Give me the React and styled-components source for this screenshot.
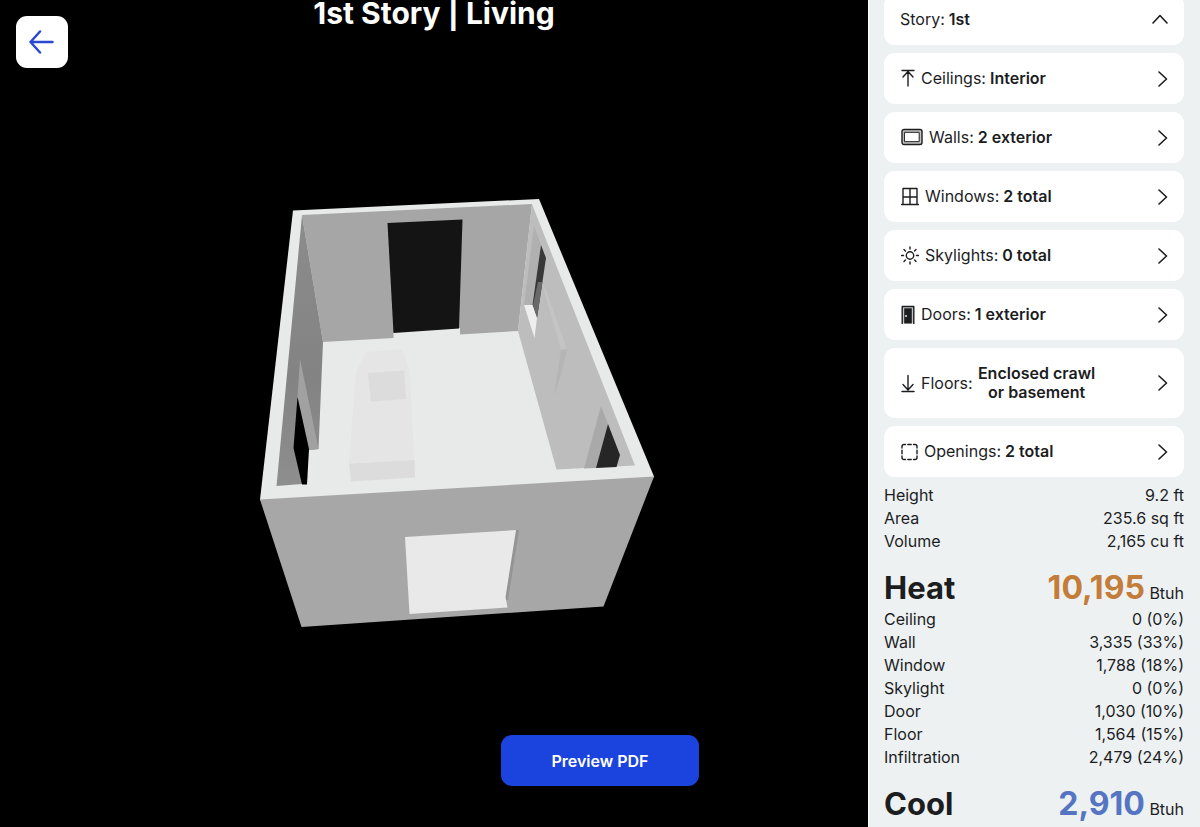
import styled, { createGlobalStyle } from 'styled-components';

const items = [
  { label: 'Ceilings', value: 'Interior', icon: 'ceiling' },
  { label: 'Walls', value: '2 exterior', icon: 'wall' },
  { label: 'Windows', value: '2 total', icon: 'window' },
  { label: 'Skylights', value: '0 total', icon: 'sun' },
  { label: 'Doors', value: '1 exterior', icon: 'door' },
  { label: 'Floors', value: 'Enclosed crawl or basement', icon: 'floor', wrap: true },
  { label: 'Openings', value: '2 total', icon: 'opening' },
];

const dimensions = [
  ['Height', '9.2 ft'],
  ['Area', '235.6 sq ft'],
  ['Volume', '2,165 cu ft'],
];

const heat = [
  ['Ceiling', '0 (0%)'],
  ['Wall', '3,335 (33%)'],
  ['Window', '1,788 (18%)'],
  ['Skylight', '0 (0%)'],
  ['Door', '1,030 (10%)'],
  ['Floor', '1,564 (15%)'],
  ['Infiltration', '2,479 (24%)'],
];

const icons = {
  ceiling: {
    width: 14,
    art: <path d='M1 1.5H13M7 17V2.5M2 8L7 2.5L12 8' />,
  },
  wall: {
    width: 22,
    art: (
      <>
        <rect x='1' y='1.5' width='20' height='15' rx='2' fill='#c4c4c4' />
        <rect x='3.8' y='4.3' width='14.4' height='9.4' fill='#fff' strokeWidth='1' />
      </>
    ),
  },
  window: {
    width: 18,
    art: <path d='M2 17.5V1.5H16V17.5M0.5 17.5H17.5M9 1.5V17.5M2 10H16' />,
  },
  sun: {
    width: 18,
    art: (
      <>
        <circle cx='9' cy='9.5' r='3.7' />
        <path d='M9 1V3M9 16V18M.5 9.5H2.5M15.5 9.5H17.5M3 3.5L4.4 4.9M13.6 14.1L15 15.5M3 15.5L4.4 14.1M13.6 4.9L15 3.5' />
      </>
    ),
  },
  door: {
    width: 14,
    art: (
      <>
        <path d='M1.2 18.5V1.5H12.8V18.5' fill='#c4c4c4' />
        <path d='M3.2 3.3H10.8V18.5H3.2Z' fill='currentColor' stroke='none' />
        <circle cx='5' cy='11' r='0.9' fill='#fff' stroke='none' />
      </>
    ),
  },
  floor: {
    width: 14,
    art: <path d='M1 18.5H13M7 2.5V17M2 11.5L7 17L12 11.5' />,
  },
  opening: {
    width: 17,
    art: (
      <path d='M1 6V4.5Q1 2.5 3 2.5H4.5M12.5 2.5H14Q16 2.5 16 4.5V6M16 14V15.5Q16 17.5 14 17.5H12.5M4.5 17.5H3Q1 17.5 1 15.5V14M6.8 2.5H10.2M6.8 17.5H10.2M1 8.3V11.7M16 8.3V11.7' />
    ),
  },
};

const Icon = ({ name }) => {
  const { width, art } = icons[name];
  return (
    <Glyph width={width} height='20' viewBox={`0 0 ${width} 20`} aria-hidden='true'>
      {art}
    </Glyph>
  );
};

const Room = () => (
  <Scene viewBox='0 0 868 827' role='img' aria-label='3D model of the living room'>
    {/* rim and floor */}
    <polygon fill='#e8e9e9' points='293,210.5 539,199 654,476.5 652,480 262,503 260,499.5' />
    {/* back wall */}
    <polygon fill='#a6a6a6' points='302,215 532,204 518,331 460,334.5 393.5,338 323,342' />
    <polygon fill='#e8e9e9' points='393.5,332 460,328 460,335 393.5,339' />
    <polygon fill='#141414' points='387.5,223 462.5,219.5 459,328.5 393.5,333' />
    {/* left wall */}
    <polygon fill='url(#leftWall)' points='302,215 323,342 318.5,449 309,450 302,484 276.5,486' />
    <polygon fill='#a1a1a1' points='300,359 297.5,397 309,450 318.5,449' />
    <polygon fill='#000' points='297.5,397 309,449 307,484.5 302,484.5 293.5,448' />
    {/* right wall */}
    <polygon fill='#bdbdbd' points='532,204 518,331 556.5,469.5 635,465.5' />
    <polygon fill='#b0b0b0' points='534,226 541,245 532.5,305 524,305' />
    <polygon fill='#383838' points='541,245 546,258 537,318 532.5,305' />
    <polygon fill='#696969' points='538,282 542.5,282 537,318 533,305' />
    <polygon fill='#eee' points='524,305 532.5,305 537,318 534.5,338' />
    <polygon fill='#c4c4c4' points='542,283 546,290 567,349 561,350' />
    <polygon fill='#b5b5b5' points='561,350 567,349 561,375 554,396' />
    <polygon fill='#a9a9a9' points='601,406 608,424 596,468 584,468.5' />
    <polygon fill='#262626' points='608,424 620,455 616.5,467 596,468' />
    {/* furniture */}
    <polygon fill='#e5e5e5' points='366,352 402,349 410,372 414,460 349,463 356,372' />
    <polygon fill='#dcdcdc' points='368,373 404,370.5 406,399 371,401.5' />
    <polygon fill='#dcdcdc' points='349,463.5 414.5,460 415,477.5 351,481.5' />
    {/* front wall */}
    <polygon fill='#a7a7a7' points='260,499.5 654,476.5 603.5,606.5 301.5,627' />
    <polygon fill='#949494' points='516,530 519,530 508,600 505,600' />
    <polygon fill='#e9e9e9' points='405,537 516,530 505.5,597 507.5,607.5 409.5,614' />
    <defs>
      <linearGradient id='leftWall' x1='0' y1='0' x2='0' y2='1'>
        <stop offset='0' stopColor='#8c8c8c' />
        <stop offset='0.6' stopColor='#838383' />
        <stop offset='1' stopColor='#8e8e8e' />
      </linearGradient>
    </defs>
  </Scene>
);

const DataTable = ({ label, rows }) => (
  <Table aria-label={label}>
    <tbody>
      {rows.map(([name, value]) => (
        <tr key={name}>
          <th scope='row'>{name}</th>
          <td>{value}</td>
        </tr>
      ))}
    </tbody>
  </Table>
);

const App = () => {
  return (
    <Wrapper>
      <GlobalStyle />
      <Viewer>
        <Room />
        <BackButton type='button' aria-label='Back'>
          <svg width='26' height='26' viewBox='0 0 26 26' aria-hidden='true'>
            <path d='M23.5 13H1.5M11 2.5L1.5 13L11 23.5' />
          </svg>
        </BackButton>
        <Title>1st Story | Living</Title>
      </Viewer>
      <Sidebar>
        <CardList>
          <Card type='button' aria-expanded='true'>
            <Label>Story:</Label>
            <Value>1st</Value>
            <Chevron width='16' height='16' viewBox='0 0 16 16' aria-hidden='true'>
              <path d='M1 11L8 3.5L15 11' />
            </Chevron>
          </Card>
          {items.map(({ label, value, icon, wrap }) => (
            <Card type='button' key={label}>
              <Icon name={icon} />
              <Label>{label}:</Label>
              <Value $wrap={wrap}>{value}</Value>
              <Chevron width='10' height='16' viewBox='0 0 10 16' aria-hidden='true'>
                <path d='M1 1L8.5 8L1 15' />
              </Chevron>
            </Card>
          ))}
        </CardList>
        <DataTable label='Dimensions' rows={dimensions} />
        <Load>
          <h2>Heat</h2>
          <p>
            <Amount $color='#c47c3a'>10,195</Amount> Btuh
          </p>
        </Load>
        <DataTable label='Heat load' rows={heat} />
        <Load>
          <h2>Cool</h2>
          <p>
            <Amount $color='#5575c2'>2,910</Amount> Btuh
          </p>
        </Load>
      </Sidebar>
      <PreviewButton type='button'>Preview PDF</PreviewButton>
    </Wrapper>
  );
};

const GlobalStyle = createGlobalStyle`
  * {
    box-sizing: border-box;
  }
  body {
    margin: 0;
    background: #000;
    color: #1c1d1f;
    font-family: Inter, 'Liberation Sans', sans-serif;
    font-size: 16px;
  }
  button {
    font: inherit;
    color: inherit;
    border: none;
    cursor: pointer;
  }
`;

const Wrapper = styled.main`
  display: flex;
  height: 100vh;
  overflow: hidden;
  position: relative;
`;

const Viewer = styled.section`
  flex: 1;
  min-width: 0;
  position: relative;
  background: #000;
`;

const Scene = styled.svg`
  display: block;
  width: 100%;
  height: 100%;
`;

const BackButton = styled.button`
  position: absolute;
  top: 16px;
  left: 16px;
  width: 52px;
  height: 52px;
  padding: 0;
  display: flex;
  align-items: center;
  justify-content: center;
  background: #fff;
  border-radius: 11px;
  svg {
    fill: none;
    stroke: #2a49cf;
    stroke-width: 2.5;
    stroke-linecap: round;
    stroke-linejoin: round;
  }
`;

const Title = styled.h1`
  position: absolute;
  top: 0;
  left: 0;
  right: 0;
  margin: 0;
  text-align: center;
  font-size: 30px;
  font-weight: 700;
  line-height: 26px;
  color: #fff;
  pointer-events: none;
`;

const PreviewButton = styled.button`
  position: absolute;
  bottom: 41px;
  left: 50%;
  transform: translateX(-50%);
  width: 198px;
  height: 51px;
  background: #1b43dd;
  border-radius: 11px;
  color: #fff;
  font-weight: 600;
`;

const Sidebar = styled.aside`
  flex: 0 0 332px;
  padding: 0 16px 0 15px;
  background: #edf1f2;
  border-left: 1px solid #fafbfb;
  overflow: hidden;
`;

/* the list is scrolled slightly past the top of the panel */
const CardList = styled.div`
  display: flex;
  flex-direction: column;
  gap: 8px;
  margin: -6px 0 7px;
`;

const Card = styled.button`
  display: flex;
  align-items: center;
  width: 100%;
  padding: 16px;
  line-height: 19px;
  background: #fff;
  border-radius: 11px;
`;

const Glyph = styled.svg`
  flex: none;
  height: 20px;
  margin: -1px 6px -1px 1px;
  fill: none;
  stroke: currentColor;
  stroke-width: 1.4;
  stroke-linecap: round;
  stroke-linejoin: round;
`;

const Label = styled.span`
  margin-right: 4px;
`;

const Value = styled.strong`
  font-weight: 600;
  text-align: center;
  max-width: ${({ $wrap }) => ($wrap ? '120px' : 'none')};
`;

const Chevron = styled.svg`
  flex: none;
  margin-left: auto;
  fill: none;
  stroke: currentColor;
  stroke-width: 1.6;
  stroke-linecap: round;
  stroke-linejoin: round;
`;

const Table = styled.table`
  width: 100%;
  border-collapse: collapse;
  line-height: 23px;
  th,
  td {
    padding: 0;
    font-weight: 400;
    text-align: left;
  }
  td {
    text-align: right;
  }
`;

const Load = styled.div`
  display: flex;
  align-items: baseline;
  justify-content: space-between;
  margin-top: 15px;
  h2,
  p {
    margin: 0;
  }
  h2 {
    font-size: 31px;
    font-weight: 700;
    line-height: 40px;
  }
  p {
    line-height: 1;
  }
`;

const Amount = styled.strong`
  font-size: 32px;
  font-weight: 700;
  color: ${({ $color }) => $color};
`;

export default App;
